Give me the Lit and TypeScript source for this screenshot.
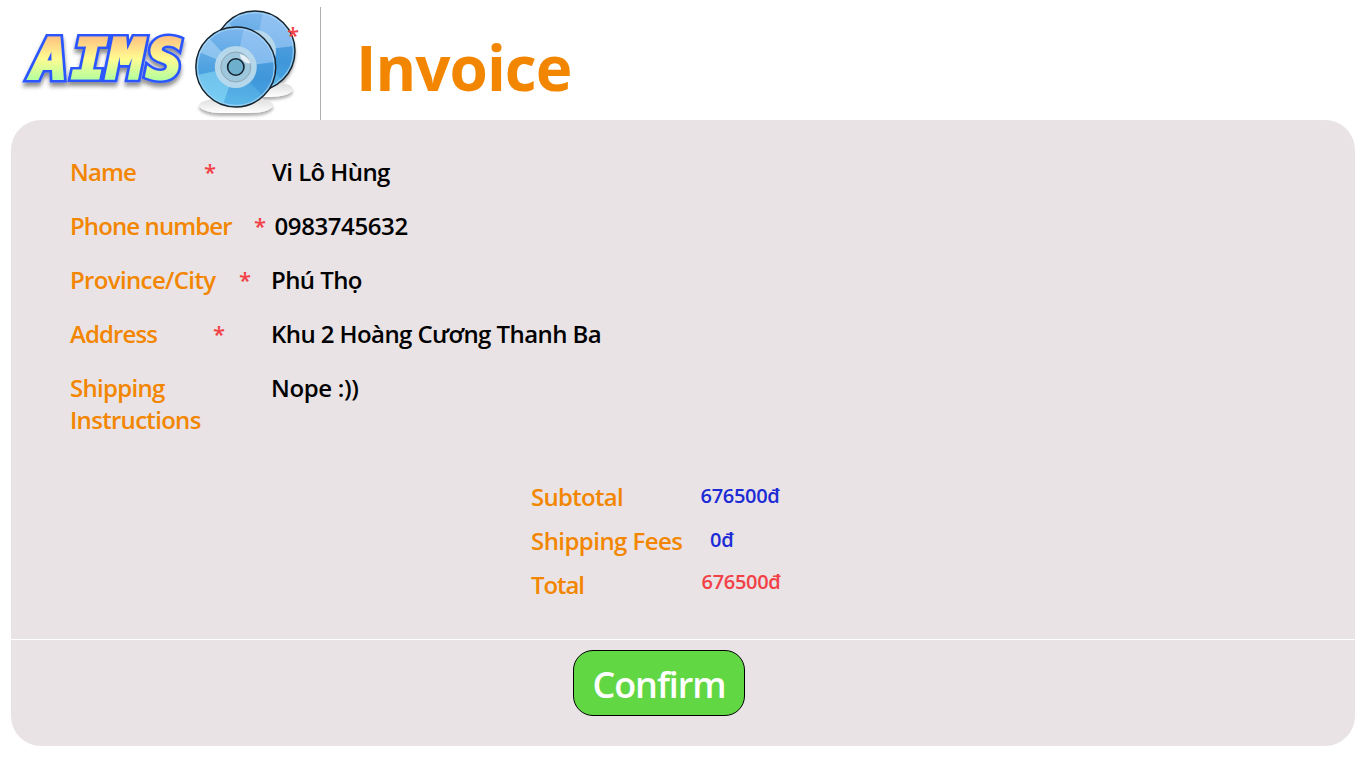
import { LitElement, html, css, svg } from "lit";
import { customElement } from "lit/decorators.js";

interface Field { key: string; label: string; value: string; required: boolean; }

const fields: Field[] = [
  { key: "person", label: "Name", value: "Vi Lô Hùng", required: true },
  { key: "phone", label: "Phone number", value: "0983745632", required: true },
  { key: "city", label: "Province/City", value: "Phú Thọ", required: true },
  { key: "address", label: "Address", value: "Khu 2 Hoàng Cương Thanh Ba", required: true },
  { key: "note", label: "Shipping Instructions", value: "Nope :))", required: false },
];

const totals = [
  { key: "subtotal", label: "Subtotal", value: "676500đ" },
  { key: "fees", label: "Shipping Fees", value: "0đ" },
  { key: "total", label: "Total", value: "676500đ" },
];

// One disc face, centred on 0,0 with a radius of 40.
const disc = svg`
  <circle r="40" fill="url(#face)"/>
  <path d="M0 0L8-39A40 40 0 0 1 30-26ZM0 0L39-5A40 40 0 0 0 30-26Z" fill="#a9cdfa" opacity=".5"/>
  <path d="M0 0L39-5A40 40 0 0 1 27 29Z" fill="#2380cf" opacity=".3"/>
  <path d="M0 0L-13 38A40 40 0 0 1 -39 8Z" fill="#9eecff" opacity=".45"/>
  <path d="M0 0L-37-15A40 40 0 0 1 -27-29Z" fill="#c4e4fa" opacity=".45"/>
  <circle r="38.4" fill="none" stroke="#a7d6f5" stroke-width="1.2" opacity=".8"/>
  <circle r="40" fill="none" stroke="#18232c" stroke-width="1.4"/>
  <circle r="21" fill="#b9d9eb" opacity=".95"/>`;

@customElement("aims-logo")
export class AimsLogo extends LitElement {
  static styles = css`
    :host { display: block; width: 320px; height: 120px; }
    .art { display: block; }
    .word { font: italic bold 55px "DejaVu Sans Mono", monospace; }
    .star { font: 600 22px "Open Sans", sans-serif; }
  `;
  render() {
    return html`<svg class="art" width="320" height="120" viewBox="0 0 320 120">
      <defs>
        <linearGradient id="ink" gradientUnits="userSpaceOnUse" x1="0" y1="36" x2="0" y2="81">
          <stop offset="0" stop-color="#ffc080"/><stop offset=".5" stop-color="#fffb91"/><stop offset="1" stop-color="#b0ff9e"/>
        </linearGradient>
        <linearGradient id="face" x1=".5" y1="0" x2=".4" y2="1">
          <stop offset="0" stop-color="#7eb7ee"/><stop offset=".6" stop-color="#4ba1df"/><stop offset="1" stop-color="#5cb9e9"/>
        </linearGradient>
        <linearGradient id="base" x1="0" y1="0" x2="0" y2="1">
          <stop offset="0" stop-color="#dcdcdc"/><stop offset="1" stop-color="#fff"/>
        </linearGradient>
        <filter id="drop" x="-20%" y="-20%" width="140%" height="150%">
          <feDropShadow dx="0" dy="4" stdDeviation="2" flood-color="#000" flood-opacity=".45"/>
        </filter>
        <filter id="soft" x="-20%" y="-50%" width="140%" height="250%">
          <feDropShadow dx="0" dy="3" stdDeviation="1.5" flood-color="#000" flood-opacity=".3"/>
        </filter>
      </defs>
      <g transform="scale(1.07 1)">
        <text class="word" x="30 67 101 137" y="78" fill="url(#ink)" stroke="#2b55ff" stroke-width="8" filter="url(#drop)">AIMS</text>
        <text class="word" aria-hidden="true" x="30 67 101 137" y="78" fill="url(#ink)" stroke="url(#ink)" stroke-width="2.8">AIMS</text>
      </g>
      <g filter="url(#soft)">
        <path d="M238 88Q290 78 293 89Q291 97 264 97Z" fill="url(#base)"/>
        <path d="M199 106Q198 98 236 98Q275 98 273 106Q268 113 249 113H219Q203 112 199 106Z" fill="url(#base)"/>
        <g transform="translate(255 51)">${disc}</g>
      </g>
      <g transform="translate(235.8 67)">
        ${disc}
        <circle r="15" fill="#8ebcd4" fill-opacity=".6" stroke="#91a5b0" stroke-width="1"/>
        <path d="M4-13Q12-11 15-4Q10-2 5-9Z" fill="#fff" opacity=".75"/>
        <circle r="8.2" fill="#6fafce" stroke="#14242e" stroke-width="1.6"/>
      </g>
      <text class="star" x="287" y="43" fill="#f24146">*</text>
    </svg>`;
  }
}

@customElement("app-root")
export class AppRoot extends LitElement {
  static styles = css`
    :host { display: block; height: 768px; overflow: hidden; background: #fff; font: 600 24px/32px "Open Sans", sans-serif; color: #000; }
    .head { display: flex; height: 120px; }
    .rule { width: 1px; margin-top: 7px; background: #b0b0b0; }
    .title { margin: 25px 0 0 35px; font: 700 62px/84px "Open Sans", sans-serif; letter-spacing: -1px; color: #f38600; }
    .panel { box-sizing: border-box; height: 626px; margin: 0 11px; padding-top: 36px; border-radius: 30px; background: #e9e3e5; }
    .fields { display: flex; flex-direction: column; gap: 22px; height: 325px; padding-left: 59px; }
    .field { display: flex; white-space: nowrap; }
    .label { width: 134px; color: #f38600; letter-spacing: -.9px; }
    .star { width: 67px; color: #f24146; font-size: 22px; line-height: 30px; }
    .value { letter-spacing: -.58px; }
    .person .star { width: 68px; }
    .phone .label { width: 184px; } .phone .star { width: 20.5px; } .phone .value { letter-spacing: -.4px; }
    .city .label { width: 169px; letter-spacing: -.65px; } .city .star { width: 32px; }
    .address .label { width: 143px; } .address .star { width: 58px; }
    .note .label { width: 201px; white-space: normal; letter-spacing: -.7px; }
    .note .value { letter-spacing: -.35px; }
    .note .text { display: block; width: 140px; }
    .totals { display: flex; flex-direction: column; gap: 12px; height: 158px; padding-left: 520px; }
    .total-row { display: flex; white-space: nowrap; }
    .caption { width: 169.5px; color: #f38600; letter-spacing: -.7px; }
    .fees .caption { letter-spacing: -.55px; }
    .total .caption { letter-spacing: -1.1px; }
    .amount { font-size: 20px; line-height: 30px; letter-spacing: -.3px; color: #1c2bd6; }
    .fees .amount { margin-left: 9.5px; }
    .total .amount { margin: -2px 0 0 1px; color: #f24146; }
    .foot { display: flex; height: 106px; border-top: 1px solid #fff; }
    .confirm { box-sizing: border-box; width: 172px; height: 66px; margin: 10px 0 0 562px; padding: 4px 0 0; border: 1px solid #000; border-radius: 20px; background: #62d744; color: #fff; font: 600 36px/60px "Open Sans", sans-serif; letter-spacing: -1.1px; }
  `;
  render() {
    return html`
      <header class="head"><aims-logo></aims-logo><div class="rule"></div><h1 class="title">Invoice</h1></header>
      <main class="panel">
        <section class="fields">
          ${fields.map(f => html`<div class="field ${f.key}">
            <span class="label"><span class="text">${f.label}</span></span>
            ${f.required ? html`<span class="star">*</span>` : ""}
            <span class="value">${f.value}</span>
          </div>`)}
        </section>
        <section class="totals">
          ${totals.map(t => html`<div class="total-row ${t.key}"><span class="caption">${t.label}</span><span class="amount">${t.value}</span></div>`)}
        </section>
        <footer class="foot"><button class="confirm">Confirm</button></footer>
      </main>`;
  }
}
